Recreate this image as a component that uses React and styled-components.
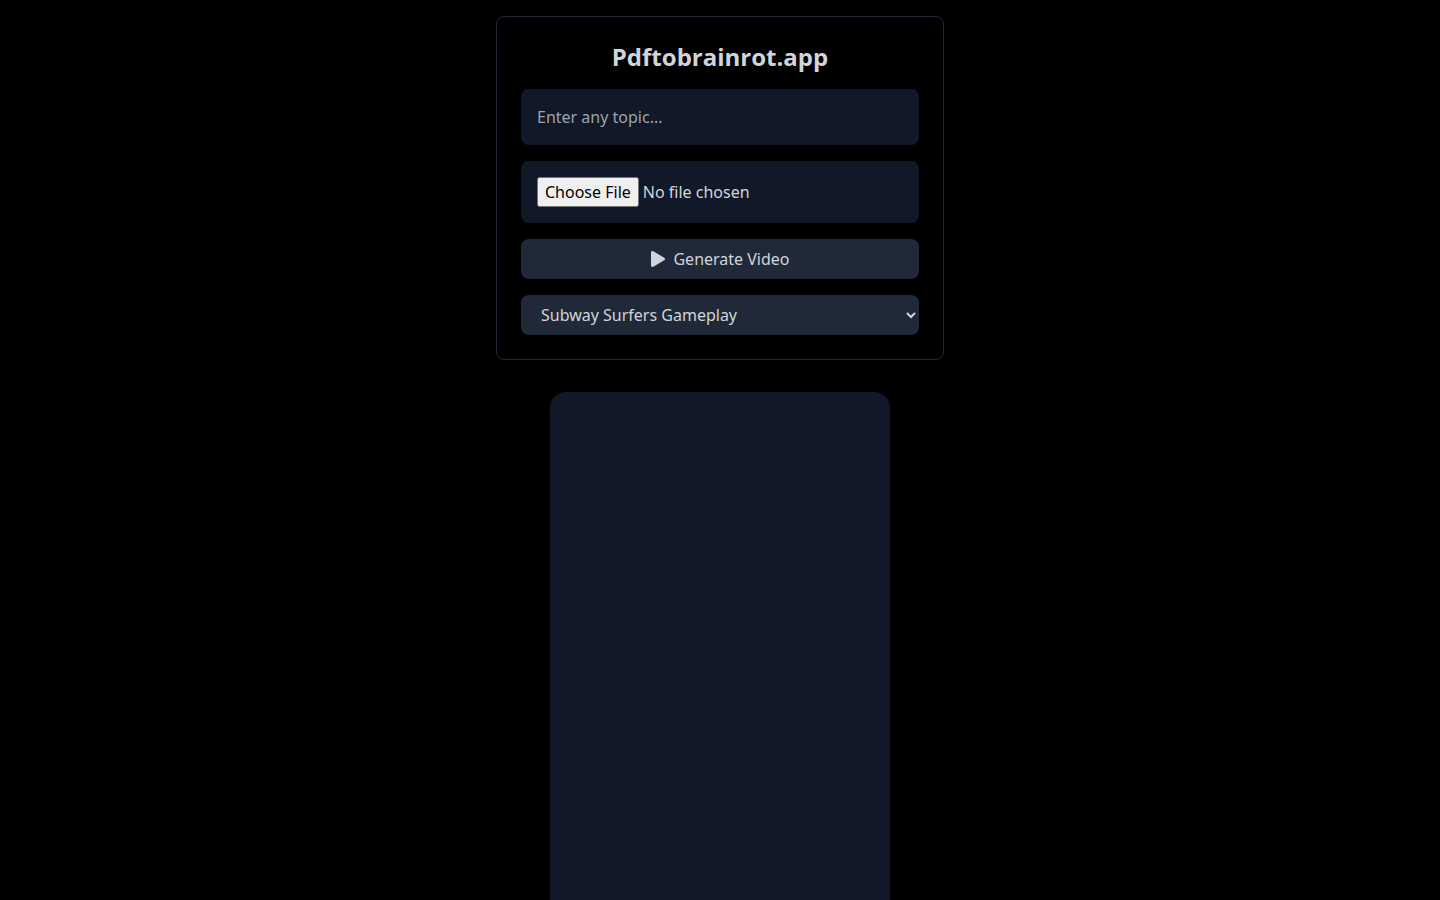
import React from "react";
import styled, { createGlobalStyle } from "styled-components";
import { FaPlay } from "react-icons/fa";

const Global = createGlobalStyle`
  html, body { margin: 0; padding: 0; background: #000; height: 900px; overflow: hidden; }
  * { box-sizing: border-box; }
  body { font-family: "Noto Sans", sans-serif; font-size: 16px; line-height: 1.5; color: #d1d5db; }
`;
const Page = styled.main`
  display: flex; flex-direction: column; align-items: center; padding-top: 16px; gap: 32px;
`;
const Card = styled.section`
  width: 448px; padding: 24px; background: #000; border: 1px solid #1f2937; border-radius: 8px;
  display: flex; flex-direction: column; gap: 16px;
`;
const Title = styled.h1`
  margin: 0; font-family: "Open Sans", sans-serif; font-size: 24px; line-height: 32px; font-weight: 700;
  text-align: center; color: #d1d5db;
`;
const TopicInput = styled.input`
  width: 100%; height: 56px; padding: 16px; border: 0; border-radius: 8px; background: #111827;
  color: #d1d5db; font: inherit; outline: none;
  &::placeholder { color: #9ca3af; opacity: 1; }
`;
const FileInput = styled.input`
  display: block; width: 100%; height: 62px; padding: 16px; border: 0; border-radius: 8px; background: #111827;
  color: #d1d5db; font: inherit;
  &::file-selector-button { font: inherit; height: 30px; }
`;
const GenerateButton = styled.button`
  height: 40px; display: flex; align-items: center; justify-content: center; gap: 7px; border: 0; border-radius: 8px;
  background: #1f2937; color: #d1d5db; font: inherit;
`;
const Select = styled.select`
  width: 100%; height: 40px; padding: 0 16px; border: 0; border-radius: 8px; background: #1f2937;
  color: #d1d5db; font: inherit;
`;
const VideoPanel = styled.div`
  width: 340px; height: 604px; flex: none; background: #111827; border-radius: 16px;
`;

export default function App() {
  return (
    <>
      <Global />
      <Page>
        <Card>
          <Title>Pdftobrainrot.app</Title>
          <TopicInput placeholder="Enter any topic..." />
          <FileInput type="file" />
          <GenerateButton>
            <FaPlay size={16} />
            Generate Video
          </GenerateButton>
          <Select defaultValue="s">
            <option value="s">Subway Surfers Gameplay</option>
          </Select>
        </Card>
        <VideoPanel />
      </Page>
    </>
  );
}
